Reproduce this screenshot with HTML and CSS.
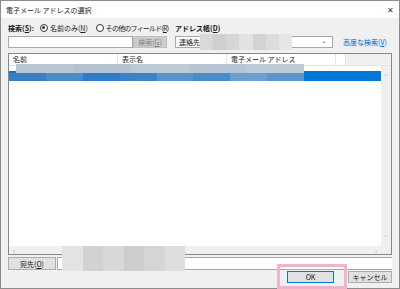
FILE: index.html
```html
<!DOCTYPE html>
<html lang="ja">
<head>
  <meta charset="UTF-8">
  <title>電子メール アドレスの選択</title>
  <link rel="stylesheet" href="styles.css">
</head>
<body>
  <div class="dialog">
    <div class="titlebar">
      <span>電子メール アドレスの選択</span>
      <span class="close">✕</span>
    </div>

    <div class="content">
      <div class="row labels">
        <div class="left">
          <b>検索(<u>S</u>):</b>
          <span class="radio checked"></span><span class="opt first">名前のみ(<u>N</u>)</span>
          <span class="radio"></span><span class="opt narrow">その他のフィールド(<u>R</u>)</span>
        </div>
        <div class="right"><b>アドレス帳(<u>D</u>)</b></div>
      </div>

      <div class="row inputs">
        <div class="left">
          <input class="search" type="text">
          <button class="btn disabled">検索(<u>G</u>)</button>
        </div>
        <div class="right">
          <div class="combo">
            <span class="combo-text">連絡先</span>
            <span class="chevron">⌄</span>
            <div class="mosaic combo-mosaic">
              <i style="background:#d9d9d9"></i><i style="background:#cfcfcf"></i><i style="background:#d6d6d6"></i><i style="background:#e2e2e2"></i><i style="background:#d3d3d3"></i><i style="background:#dcdcdc"></i><i style="background:#e6e6e6"></i>
            </div>
          </div>
          <a class="link">高度な検索(<u>V</u>)</a>
        </div>
      </div>

      <div class="list">
        <div class="list-header">
          <span class="col">名前</span>
          <span class="col">表示名</span>
          <span class="col">電子メール アドレス</span>
          <span class="col short"></span>
          <span class="col fill"></span>
        </div>
        <div class="list-main">
          <div class="rows">
            <div class="entry selected"></div>
          </div>
          <div class="vscroll">
            <span>︿</span>
            <span>﹀</span>
          </div>
        </div>
        <div class="hscroll">
          <span class="arrow">‹</span>
          <span class="arrow">›</span>
          <span class="corner"></span>
        </div>
        <div class="mosaic row-mosaic">
          <div class="band top">
            <i style="background:#b9c7d5"></i><i style="background:#b4c3d2"></i><i style="background:#bccad7"></i><i style="background:#b6c5d3"></i><i style="background:#bdcbd8"></i>
          </div>
          <div class="band bottom">
            <i style="background:#3a7fc1"></i><i style="background:#4b8bc8"></i><i style="background:#2f7cc8"></i><i style="background:#3c82c6"></i><i style="background:#5893cc"></i><i style="background:#4a8cca"></i><i style="background:#6a9fd0"></i><i style="background:#5a95cd"></i>
          </div>
        </div>
      </div>

      <div class="row to-row">
        <button class="btn to">宛先(<u>O</u>)</button>
        <div class="to-field"></div>
        <div class="mosaic to-mosaic">
          <i style="background:#e3e3e3"></i><i style="background:#d2d2d2"></i><i style="background:#d8d8d8"></i><i style="background:#cdcdcd"></i><i style="background:#d5d5d5"></i><i style="background:#dedede"></i>
        </div>
      </div>

      <div class="row actions">
        <button class="btn ok">OK</button>
        <button class="btn cancel">キャンセル</button>
      </div>
    </div>
  </div>
</body>
</html>
```

FILE: styles.css
```css
body {
  margin: 0;
  font-family: "Noto Sans CJK JP", "Noto Sans", sans-serif;
  font-size: 7px;
  color: #1a1a1a;
  white-space: nowrap;
}

.dialog {
  width: 400px;
  height: 289px;
  box-sizing: border-box;
  border: 1px solid #8c8c8c;
  background: #f0f0f0;
  display: flex;
  flex-direction: column;
}

.titlebar {
  height: 17px;
  background: #fff;
  display: flex;
  align-items: center;
  justify-content: space-between;
  padding: 0 5px 0 5px;
}

.close {
  font-size: 8px;
  color: #333;
}

.content {
  padding: 4px 7px 0 7px;
  position: relative;
}

.row {
  display: flex;
  align-items: center;
}

.left {
  width: 167px;
  flex: none;
  display: flex;
  align-items: center;
}

.right {
  display: flex;
  align-items: center;
}

.labels {
  height: 11px;
}

.labels b {
  margin-right: 6px;
}

.opt {
  flex: none;
  margin-left: 2px;
}

.opt.first {
  margin-right: 8px;
}

.opt.narrow {
  letter-spacing: -0.8px;
}

.radio {
  width: 6px;
  height: 6px;
  border: 1px solid #333;
  border-radius: 50%;
  background: #fff;
  box-sizing: content-box;
  position: relative;
  flex: none;
}

.radio.checked::after {
  content: "";
  position: absolute;
  left: 1.5px;
  top: 1.5px;
  width: 3px;
  height: 3px;
  border-radius: 50%;
  background: #333;
}

.inputs {
  margin-top: 3px;
  height: 12px;
}

.search {
  width: 125px;
  height: 12px;
  box-sizing: border-box;
  border: 1px solid #a8a8a8;
  background: #fff;
  margin: 0;
  padding: 0;
}

.btn {
  font-family: inherit;
  font-size: 7px;
  height: 12px;
  box-sizing: border-box;
  border: 1px solid #adadad;
  background: #e1e1e1;
  padding: 0;
  margin: 0;
  color: #1a1a1a;
  line-height: 10px;
}

.btn.disabled {
  width: 34px;
  background: #cccccc;
  border-color: #bfbfbf;
  color: #838383;
}

.combo {
  width: 158px;
  height: 12px;
  box-sizing: border-box;
  border: 1px solid #a8a8a8;
  background: #fff;
  display: flex;
  align-items: center;
  justify-content: space-between;
  position: relative;
}

.combo-text {
  padding-left: 3px;
  border-right: 1px solid #a8a8a8;
  padding-right: 1px;
  line-height: 10px;
}

.chevron {
  color: #666;
  font-size: 7px;
  margin-right: 5px;
  line-height: 6px;
  margin-top: -4px;
}

.link {
  margin-left: 10px;
  color: #0066cc;
}

.mosaic {
  position: absolute;
  display: flex;
}

.mosaic i {
  flex: 1;
}

.combo-mosaic {
  left: 24px;
  top: -3px;
  width: 92px;
  height: 16px;
}

.list {
  margin-top: 5px;
  height: 200px;
  border: 1px solid #828790;
  background: #fff;
  display: flex;
  flex-direction: column;
  position: relative;
}

.list-header {
  height: 11px;
  display: flex;
  border-bottom: 1px solid #e5e5e5;
}

.list-header .col {
  width: 104px;
  padding-left: 4px;
  border-right: 1px solid #e5e5e5;
  line-height: 11px;
}

.list-header .col.short {
  width: 9px;
  padding: 0;
}

.list-header .col.fill {
  flex: 1;
  background: #f0f0f0;
  border-right: none;
}

.list-main {
  flex: 1;
  display: flex;
}

.rows {
  flex: 1;
  padding-top: 5px;
}

.entry {
  height: 10px;
}

.entry.selected {
  background: #0078d7;
}

.vscroll {
  width: 10px;
  background: #f0f0f0;
  display: flex;
  flex-direction: column;
  justify-content: space-between;
  align-items: center;
  color: #a0a0a0;
  font-size: 5px;
  padding: 3px 0 6px;
}

.hscroll {
  height: 8px;
  background: #f0f0f0;
  display: flex;
  align-items: center;
  color: #a0a0a0;
  font-size: 7px;
}

.hscroll .arrow {
  width: 10px;
  text-align: center;
  line-height: 8px;
}

.hscroll .arrow:nth-child(2) {
  margin-left: auto;
}

.hscroll .corner {
  width: 10px;
}

.row-mosaic {
  left: 0;
  top: 10px;
  width: 295px;
  height: 17px;
  flex-direction: column;
}

.band {
  display: flex;
  flex: 1;
}

.band i {
  flex: 1;
}

.band.top {
  margin-left: 7px;
}

.to-row {
  margin-top: 2px;
  height: 13px;
  position: relative;
}

.btn.to {
  width: 48px;
  height: 13px;
}

.to-field {
  flex: 1;
  height: 13px;
  margin-left: 1px;
  box-sizing: border-box;
  border: 1px solid #a8a8a8;
  border-right: none;
  background: #fff;
}

.to-mosaic {
  left: 54px;
  top: -11px;
  width: 123px;
  height: 25px;
}

.actions {
  margin-top: 1px;
  justify-content: flex-end;
}

.btn.ok {
  width: 47px;
  border-color: #0078d7;
  position: relative;
}

.btn.ok::after {
  content: "";
  position: absolute;
  left: -11px;
  right: -14px;
  top: -8px;
  bottom: -7px;
  border: 3px solid #f3b2cb;
}

.btn.cancel {
  width: 44px;
  margin-left: 14px;
}
```
